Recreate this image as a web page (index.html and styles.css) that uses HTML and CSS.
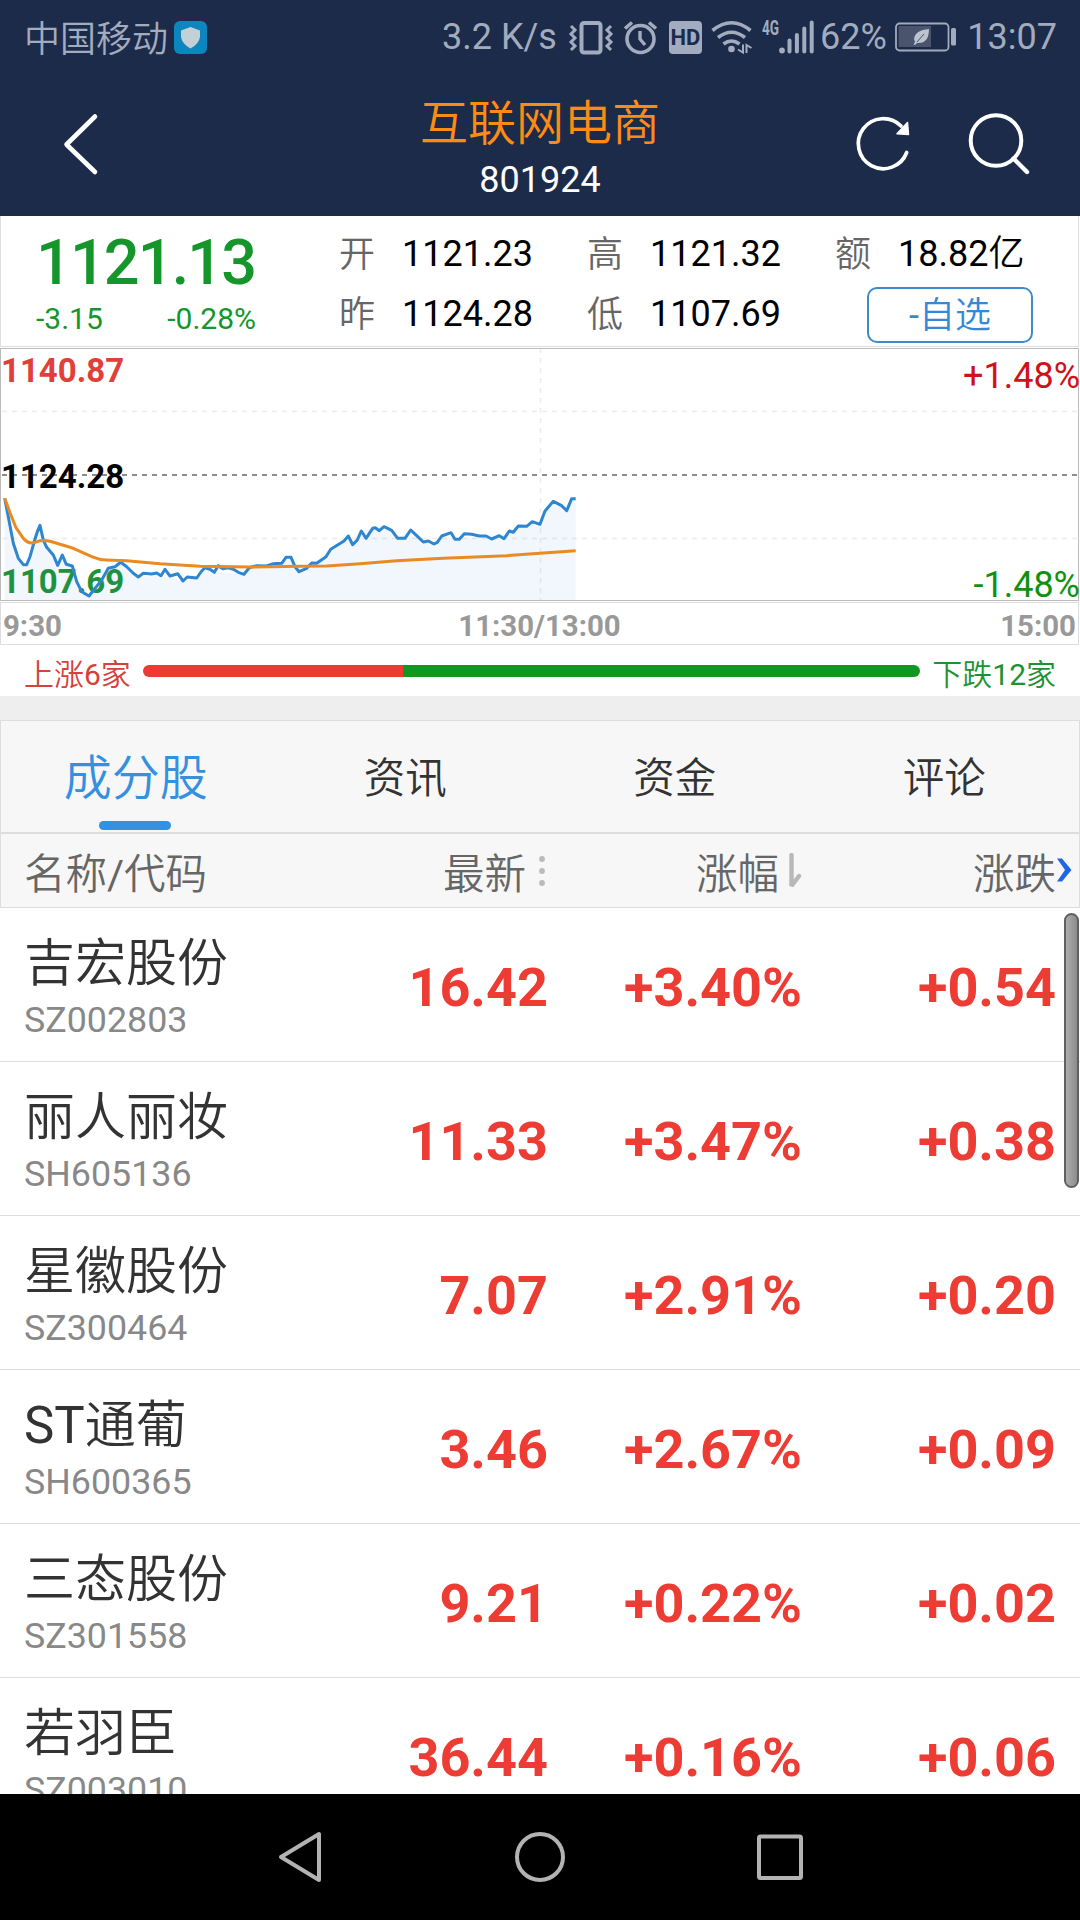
FILE: index.html
```html
<!DOCTYPE html>
<html lang="zh-CN">
<head>
<meta charset="utf-8">
<title>互联网电商 801924</title>
<link rel="stylesheet" href="styles.css">
</head>
<body>
<div class="screen">
  <header class="top">
    <div class="status">
      <span class="carrier">中国移动</span>
      <svg class="shield" width="33" height="33" viewBox="0 0 33 33"><rect width="33" height="33" rx="6" fill="#0d86bd"/><path d="M16.500 6L26 9.500V16Q25 23 16.500 27.500Q8 23 7 16V9.500Z" fill="#c3d0d6"/></svg>
      <span class="speed">3.2 K/s</span>
      <svg class="status-icons" width="250" height="40" viewBox="566 16 250 40" fill="none" stroke="#a3abbe">
        <rect x="581.500" y="22" width="19" height="29.500" rx="2.500" stroke-width="4"/>
        <path d="M571 25l4 4-4 4 4 4-4 4 4 4-4 4M611 25l-4 4 4 4-4 4 4 4-4 4 4 4" stroke-width="3"/>
        <circle cx="640.500" cy="38" r="13.500" stroke-width="3.600"/>
        <path d="M640 30v8l5 6" stroke-width="3.400"/>
        <path d="M625 27.500l7-6M656 27.500l-7-6" stroke-width="3.600"/>
        <rect x="669" y="20" width="33" height="33" rx="4" fill="#a3abbe" stroke="none"/>
        <text x="685.500" y="44" class="hd">HD</text>
        <path d="M712.500 29.500Q731.500 14 750.500 29.500M718 36.500Q731.500 26 745 36.500M723.500 43Q731.500 37 739.500 43" stroke-width="3.600"/>
        <circle cx="731.500" cy="48" r="3.300" fill="#a3abbe" stroke="none"/>
        <path d="M743 43.500v8l-5-3M746.500 52v-8l5 3" stroke-width="2"/>
        <text x="762" y="34" class="lte" textLength="17" lengthAdjust="spacingAndGlyphs">4G</text>
        <path d="M789.500 39.500v11M796.900 34v16.500M804.300 27.500v23M811.700 21.500v29" stroke-width="4" stroke-linecap="round"/>
        <circle cx="782" cy="49.500" r="2.900" fill="#a3abbe" stroke="none"/>
      </svg>
      <span class="percent">62%</span>
      <svg class="battery" width="62" height="30" viewBox="0 0 62 30"><rect x="1" y="1.500" width="52.500" height="27" rx="3.500" fill="none" stroke="#a3abbe" stroke-width="1.800"/><rect x="3.500" y="4" width="32.500" height="21" fill="#4a546d"/><path d="M34 7Q20 8 19 17L20 20L18.500 22.500L20 23L22 21Q34 22 34 7Z" fill="#bcc2cf"/><path d="M22 20L29 12" stroke="#4a546d" stroke-width="1"/><rect x="56" y="6" width="5" height="17.500" rx="1.500" fill="#a3abbe"/></svg>
      <span class="clock">13:07</span>
    </div>
    <div class="nav">
      <svg class="back" width="120" height="80" viewBox="0 104 120 80"><path d="M95 116.500L66.500 144.500L95 172" fill="none" stroke="#fff" stroke-width="4.600" stroke-linecap="round" stroke-linejoin="round"/></svg>
      <div class="title">
        <h1>互联网电商</h1>
        <p>801924</p>
      </div>
      <svg class="actions" width="200" height="80" viewBox="840 104 200 80" fill="none" stroke="#fff" stroke-linecap="round">
        <path d="M906.700 152.500A25 25 0 1 1 901 126" stroke-width="3.700"/>
        <path d="M897 133.700L908.500 134.500L907.500 122.500Z" fill="#fff" stroke-width="1.500" stroke-linejoin="round"/>
        <circle cx="996" cy="140.500" r="25.300" stroke-width="4"/>
        <path d="M1013.500 158.500L1027 172" stroke-width="4.400"/>
      </svg>
    </div>
  </header>

  <section class="quote">
    <div class="last">
      <strong>1121.13</strong>
      <div class="change"><span>-3.15</span><span>-0.28%</span></div>
    </div>
    <dl class="stats">
      <dt>开</dt><dd>1121.23</dd>
      <dt>高</dt><dd>1121.32</dd>
      <dt>额</dt><dd>18.82亿</dd>
      <dt>昨</dt><dd>1124.28</dd>
      <dt>低</dt><dd>1107.69</dd>
      <dd class="watch"><button>-自选</button></dd>
    </dl>
  </section>

  <section class="chart">
    <svg class="grid" width="1077" height="251" viewBox="1 1 1077 251" fill="none">
      <path d="M2 63.500H1078M2 190.500H1078M540.500 0V252" stroke="#ececec" stroke-width="1.500" stroke-dasharray="5 5"/>
      <path d="M2 127H1078" stroke="#8c8c8c" stroke-width="2" stroke-dasharray="5 5"/>
    </svg>
    <span class="label high">1140.87</span>
    <span class="label mid">1124.28</span>
    <span class="label low">1107.69</span>
    <span class="pct up">+1.48%</span>
    <span class="pct down">-1.48%</span>
    <svg class="lines" width="1077" height="251" viewBox="1 1 1077 251" fill="none" stroke-linejoin="round">
      <path fill="#3388d8" fill-opacity=".07" d="M4.700 252V150.300L8.300 168.700 13.300 195.300 18.300 210.300 23.300 216.700H26.700L30 208.700 34.700 192 37.300 183.700 40 177.300 43.300 192 46.700 199.300 53.300 207 57.700 217.300 62.300 207 66.300 216.300 72.300 218 76.700 233.700 81.700 243.700 89 248 95 240.300 101.700 232 108.300 220.300 120.700 214.300 138.300 229 161 227.700 183 233 196.700 230 205 219.700 214.300 224.300 244 226.300 249.300 219.700 281.700 215.300 291 209.300 299 223.700 311.700 215 326 208.700 330.700 201.300 344 193 352.700 194 361.300 183 372.700 180.300 391.700 182.300 397.700 190.300 410.700 182 423.300 194 434 196 441.700 188 459.300 190 479.300 188 504 190.700 518.300 178 540 176.300 545 163 553.300 153.300 566.700 162.700 571.700 150.700H575.700V252Z"/>
      <polyline stroke="#2f86d0" stroke-width="3" points="4.700,150.300 8.300,168.700 13.300,195.300 18.300,210.300 23.300,216.700 26.700,216.700 30,208.700 34.700,192 37.300,183.700 40,177.300 43.300,192 46.700,199.300 53.300,207 57.700,217.300 62.300,207 66.300,216.300 72.300,218 76.700,233.700 81.700,243.700 89,248 95,240.300 101.700,232 108.300,220.300 115,218.700 120.700,214.300 126.700,218.700 133.300,225.300 138.300,229 143.300,225.300 151.700,226 156.700,225 161,227.700 165,221.300 170,228 177.700,225.700 183,233 187.300,229 196.700,230 201.700,223 205,219.700 210,221.300 214.300,224.300 218.300,217.700 222.700,220.700 228.300,219.700 233.300,221.300 238.300,224.300 244,226.300 249.300,219.700 256.700,217.700 266.700,218 273.300,215.700 281.700,215.300 286,209.300 291,209.300 295,218.700 299,223.700 306.700,220.300 311.700,215 316.700,215.300 326,208.700 330.700,201.300 344,193 348.300,188 352.700,196.700 357.300,192 361.300,183 366,190.300 372.700,180.300 375.300,179.700 379.300,182.700 384,178.700 391.700,182.300 397.700,190.300 405,190.300 410.700,182 416.700,187.700 423.300,194 428.300,193 434,196 437.300,194.300 441.700,188 451,184.700 455,191.300 459.300,191.300 464.300,185.700 471.700,186.300 479.300,188 486,188 491.700,191 499.300,187.700 504,190.700 509.300,183 513.300,184.300 518.300,178 526.700,178.300 532.300,173.700 540,176.300 545,163 553.300,153.300 561.700,157.700 566.700,162.700 571.700,150.700 575.700,150.700"/>
      <path stroke="#ea8a20" stroke-width="3" d="M4.700 150.300L10 164.700 16 179.700 23.300 190.300Q27 195 31.700 195Q36 194.500 40 192.700Q45 192 50 193.300L71.700 199.700 91.700 208.700Q99 212 106.700 212L126.700 212.700 160 215.700 200 218.300 250 219 300 218.300 326.700 218 360 215.700 396.700 212.700 443.300 210.300 506.700 207.700 540 205.300 575.700 202.700"/>
    </svg>
  </section>
  <div class="times"><span>9:30</span><span>11:30/13:00</span><span>15:00</span></div>

  <section class="breadth">
    <span class="rise">上涨6家</span>
    <div class="bar"><i class="bar-up"></i><i class="bar-down"></i></div>
    <span class="fall">下跌12家</span>
  </section>

  <nav class="tabs">
    <a class="active">成分股</a><a>资讯</a><a>资金</a><a>评论</a>
  </nav>
  <div class="row head">
    <span>名称/代码</span>
    <span class="num">最新<svg class="dots" width="22" height="36" viewBox="0 0 22 36" fill="#bbb"><circle cx="16" cy="6" r="2.900"/><circle cx="16" cy="18" r="2.900"/><circle cx="16" cy="30" r="2.900"/></svg></span>
    <span class="num">涨幅<svg class="sort" width="23" height="36" viewBox="0 0 23 36"><path d="M12.500 2V33L20 23" fill="none" stroke="#b8b8b8" stroke-width="4.400" stroke-linecap="round" stroke-linejoin="bevel"/></svg></span>
    <span class="num">涨跌<svg class="more" width="18" height="26" viewBox="0 0 18 26"><path d="M1 1.500H6L15.500 13L6 24.500H1L9 13Z" fill="#1f66e8"/></svg></span>
  </div>

  <main class="list">
    <div class="row"><div class="name"><b>吉宏股份</b><small>SZ002803</small></div><span class="num">16.42</span><span class="num">+3.40%</span><span class="num">+0.54</span></div>
    <div class="row"><div class="name"><b>丽人丽妆</b><small>SH605136</small></div><span class="num">11.33</span><span class="num">+3.47%</span><span class="num">+0.38</span></div>
    <div class="row"><div class="name"><b>星徽股份</b><small>SZ300464</small></div><span class="num">7.07</span><span class="num">+2.91%</span><span class="num">+0.20</span></div>
    <div class="row"><div class="name"><b>ST通葡</b><small>SH600365</small></div><span class="num">3.46</span><span class="num">+2.67%</span><span class="num">+0.09</span></div>
    <div class="row"><div class="name"><b>三态股份</b><small>SZ301558</small></div><span class="num">9.21</span><span class="num">+0.22%</span><span class="num">+0.02</span></div>
    <div class="row"><div class="name"><b>若羽臣</b><small>SZ003010</small></div><span class="num">36.44</span><span class="num">+0.16%</span><span class="num">+0.06</span></div>
    <div class="scrollbar"></div>
  </main>

  <footer class="keys">
    <svg width="60" height="60" viewBox="270 1827 60 60"><path d="M319 1834V1880L281 1857Z"/></svg>
    <svg width="60" height="60" viewBox="510 1827 60 60"><circle cx="540" cy="1857" r="23"/></svg>
    <svg width="60" height="60" viewBox="750 1827 60 60"><rect x="759" y="1836.500" width="42" height="41.500" rx="1.500"/></svg>
  </footer>
</div>
</body>
</html>
```
FILE: styles.css
```css
* { box-sizing: border-box; margin: 0; padding: 0; }

body {
  width: 1080px;
  font-family: Roboto, "Noto Sans CJK SC DemiLight", "Noto Sans CJK SC", sans-serif;
  color: #333;
  background: #fff;
}

svg { flex: none; }

.screen { display: flex; flex-direction: column; height: 1920px; overflow: hidden; }

/* header */
.top { height: 216px; background: #1c2b49; flex: none; }
.status {
  display: flex;
  align-items: center;
  height: 74px;
  padding: 0 23px 0 24px;
  font-size: 36px;
  color: #a3abbe;
  white-space: nowrap;
}
.carrier { width: 144px; padding-bottom: 2px; }
.shield { margin-left: 6px; }
.speed { width: 117px; margin-left: 235px; margin-right: 7px; }
.percent { width: 66px; margin-left: 4px; }
.battery { margin-left: 9px; }
.clock { margin-left: auto; }
.hd { font: 700 22px Roboto, sans-serif; fill: #1c2b49; stroke: none; text-anchor: middle; }
.lte { font: 700 20px Roboto, sans-serif; fill: #a3abbe; stroke: none; }

.nav { display: flex; justify-content: space-between; align-items: flex-start; height: 142px; padding: 0 40px 0 0; }
.nav svg { margin-top: 30px; }
.title { flex: 1; padding: 15px 0 0 120px; text-align: center; }
.title h1 { font-size: 48px; line-height: 70px; font-weight: 400; color: #ff8a14; }
.title p { font-size: 36px; line-height: 42px; color: #fff; }

/* quote */
.quote {
  display: flex;
  flex: none;
  width: 1079px;
  height: 131px;
  border: 1px solid #ddd;
  border-top: 0;
}
.last { width: 332px; padding: 12px 0 0 35px; color: #14962a; }
.last strong { display: block; font-size: 63px; line-height: 70px; font-weight: 500; letter-spacing: -1.900px; }
.change { display: flex; justify-content: space-between; width: 220px; font-size: 30px; line-height: 42px; }
.stats {
  display: grid;
  grid-template-columns: 63px 185px 63px 185px 63px 140px;
  grid-template-rows: 60px 60px;
  padding: 8px 0 0 6px;
  font-size: 36px;
  line-height: 60px;
}
.stats dt { padding-top: 1px; color: #666; }
.stats dd { color: #000; white-space: nowrap; }
.stats .watch { grid-column: 5 / 7; padding: 3px 0 0 32px; line-height: 0; }
.watch button {
  width: 166px;
  height: 56px;
  padding-top: 3px;
  border: 2px solid #3e8acb;
  border-radius: 10px;
  background: #fff;
  color: #3388d8;
  font-family: inherit;
  font-size: 36px;
  line-height: 49px;
}

/* chart */
.chart { position: relative; flex: none; width: 1079px; height: 253px; margin-top: 1px; border: 1px solid #bbb; }
.grid, .lines { position: absolute; left: 0; top: 0; }
.label { position: absolute; left: 0; font-size: 33px; line-height: 40px; font-weight: 700; }
.high { top: 2px; color: #e0403a; }
.mid { top: 108px; color: #000; }
.low { top: 213px; color: #1d9335; }
.pct { position: absolute; right: -2px; font-size: 36px; line-height: 42px; }
.up { top: 6px; color: #d0111b; }
.down { top: 215px; color: #0f920f; }
.times {
  display: flex;
  justify-content: space-between;
  flex: none;
  width: 1079px;
  height: 43px;
  margin-top: 1px;
  padding: 0 2px;
  border: 1px solid #ddd;
  font-size: 29.400px;
  line-height: 46px;
  font-weight: 700;
  color: #999;
}
.times span { width: 33%; }
.times span:nth-child(2) { text-align: center; }
.times span:nth-child(3) { text-align: right; }

/* rising and falling counts */
.breadth {
  display: flex;
  align-items: center;
  flex: none;
  height: 75px;
  padding: 0 24px;
  border-bottom: 24px solid #eee;
  font-size: 30px;
  white-space: nowrap;
}
.breadth span { padding-top: 2px; }
.rise { width: 119px; color: #d6413c; }
.bar { display: flex; width: 777px; height: 12px; border-radius: 6px; overflow: hidden; }
.bar-up { width: 260px; background: #ec3b35; }
.bar-down { flex: 1; background: #129723; }
.fall { margin-left: auto; color: #1e9232; }

/* tabs */
.tabs { display: flex; flex: none; height: 113px; border: 1px solid #ddd; background: #f7f7f7; }
.tabs a {
  position: relative;
  flex: 1;
  padding-top: 3px;
  text-align: center;
  font-size: 41.500px;
  line-height: 110px;
}
.tabs .active { font-size: 48px; color: #3590e0; }
.tabs .active::after {
  content: "";
  position: absolute;
  left: 98px;
  bottom: 2px;
  width: 72px;
  height: 9px;
  border-radius: 5px;
  background: #3590e0;
}

/* table */
.row {
  display: grid;
  grid-template-columns: 300px 224px 254px 254px;
  align-items: center;
  flex: none;
  height: 154px;
  padding: 0 24px;
  border-bottom: 1px solid #ddd;
}
.num { text-align: right; font-size: 54px; font-weight: 700; color: #ec3c34; white-space: nowrap; }
.head { height: 75px; padding: 0 23px; background: #f7f7f7; border: 1px solid #ddd; font-size: 41.500px; color: #666; }
.head .num { position: relative; display: flex; align-items: center; justify-content: flex-end; font-size: 41.500px; font-weight: 400; color: #666; }
.head .more { position: absolute; left: 100%; top: 16px; }
.name { display: flex; flex-direction: column; padding-top: 3px; }
.name b { font-size: 51px; line-height: 66px; font-weight: 400; white-space: nowrap; }
.name small { padding-top: 2px; font-size: 35.800px; line-height: 42px; color: #888; }
.list { position: relative; flex: 1; min-height: 0; overflow: hidden; }
.list .num { padding-top: 6px; }
.scrollbar {
  position: absolute;
  left: 1064px;
  top: 5px;
  width: 15px;
  height: 275px;
  border: 2px solid #606060;
  border-radius: 8px;
  background: linear-gradient(90deg, #adadad, #8c8c8c);
}

.keys { display: flex; justify-content: space-between; flex: none; height: 126px; padding: 33px 270px; background: #000; }
.keys svg { fill: none; stroke: #b3b3b3; stroke-width: 4; stroke-linejoin: round; }
```
